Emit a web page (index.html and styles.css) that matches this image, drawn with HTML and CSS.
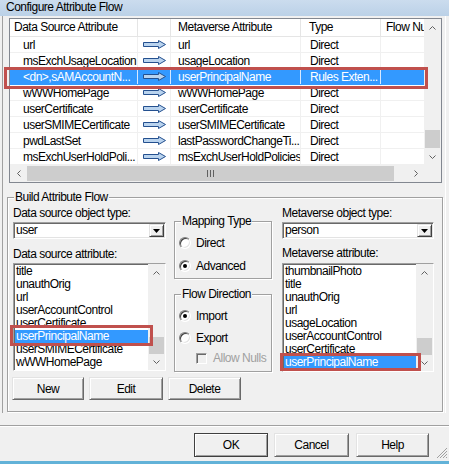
FILE: index.html
```html
<!DOCTYPE html>
<html>
<head>
<meta charset="utf-8">
<title>Configure Attribute Flow</title>
<link rel="stylesheet" href="styles.css">
</head>
<body>
<div class="title">Configure Attribute Flow</div>
<div class="frame">
  <div class="lv">
    <div class="lv-main">
      <div class="lv-body">
        <div class="lv-head">
          <div class="c c1">Data Source Attribute</div>
          <div class="c c2"></div>
          <div class="c c3">Metaverse Attribute</div>
          <div class="c c4">Type</div>
          <div class="c c5">Flow Nu</div>
        </div>
        <div class="lv-row"><div class="c c1">url</div><div class="c c2"><svg class="arrow" width="24" height="9" viewBox="0 0 24 9"><path d="M0.5 2.5H15.5V0.5L22.5 4.5L15.5 8.5V6.5H0.5Z" fill="#b9d3ee" stroke="#24508f"/></svg></div><div class="c c3">url</div><div class="c c4">Direct</div><div class="c c5"></div></div>
        <div class="lv-row"><div class="c c1">msExchUsageLocation</div><div class="c c2"><svg class="arrow" width="24" height="9" viewBox="0 0 24 9"><path d="M0.5 2.5H15.5V0.5L22.5 4.5L15.5 8.5V6.5H0.5Z" fill="#b9d3ee" stroke="#24508f"/></svg></div><div class="c c3">usageLocation</div><div class="c c4">Direct</div><div class="c c5"></div></div>
        <div class="lv-row sel"><div class="c c1">&lt;dn&gt;,sAMAccountN...</div><div class="c c2"><svg class="arrow" width="24" height="9" viewBox="0 0 24 9"><path d="M0.5 2.5H15.5V0.5L22.5 4.5L15.5 8.5V6.5H0.5Z" fill="#b9d3ee" stroke="#24508f"/></svg></div><div class="c c3">userPrincipalName</div><div class="c c4">Rules Exten...</div><div class="c c5"></div></div>
        <div class="lv-row"><div class="c c1">wWWHomePage</div><div class="c c2"><svg class="arrow" width="24" height="9" viewBox="0 0 24 9"><path d="M0.5 2.5H15.5V0.5L22.5 4.5L15.5 8.5V6.5H0.5Z" fill="#b9d3ee" stroke="#24508f"/></svg></div><div class="c c3">wWWHomePage</div><div class="c c4">Direct</div><div class="c c5"></div></div>
        <div class="lv-row"><div class="c c1">userCertificate</div><div class="c c2"><svg class="arrow" width="24" height="9" viewBox="0 0 24 9"><path d="M0.5 2.5H15.5V0.5L22.5 4.5L15.5 8.5V6.5H0.5Z" fill="#b9d3ee" stroke="#24508f"/></svg></div><div class="c c3">userCertificate</div><div class="c c4">Direct</div><div class="c c5"></div></div>
        <div class="lv-row"><div class="c c1">userSMIMECertificate</div><div class="c c2"><svg class="arrow" width="24" height="9" viewBox="0 0 24 9"><path d="M0.5 2.5H15.5V0.5L22.5 4.5L15.5 8.5V6.5H0.5Z" fill="#b9d3ee" stroke="#24508f"/></svg></div><div class="c c3">userSMIMECertificate</div><div class="c c4">Direct</div><div class="c c5"></div></div>
        <div class="lv-row"><div class="c c1">pwdLastSet</div><div class="c c2"><svg class="arrow" width="24" height="9" viewBox="0 0 24 9"><path d="M0.5 2.5H15.5V0.5L22.5 4.5L15.5 8.5V6.5H0.5Z" fill="#b9d3ee" stroke="#24508f"/></svg></div><div class="c c3">lastPasswordChangeTi...</div><div class="c c4">Direct</div><div class="c c5"></div></div>
        <div class="lv-row"><div class="c c1">msExchUserHoldPoli...</div><div class="c c2"><svg class="arrow" width="24" height="9" viewBox="0 0 24 9"><path d="M0.5 2.5H15.5V0.5L22.5 4.5L15.5 8.5V6.5H0.5Z" fill="#b9d3ee" stroke="#24508f"/></svg></div><div class="c c3">msExchUserHoldPolicies</div><div class="c c4">Direct</div><div class="c c5"></div></div>
      </div>
      <div class="vscroll">
        <div class="sb-btn"><svg width="7" height="4" viewBox="0 0 7 4"><polyline points="0.5,3.5 3.5,0.5 6.5,3.5" fill="none" stroke="#606060"/></svg></div>
        <div class="vtrack"></div>
        <div class="vthumb"></div>
        <div class="sb-btn"><svg width="7" height="4" viewBox="0 0 7 4"><polyline points="0.5,0.5 3.5,3.5 6.5,0.5" fill="none" stroke="#606060"/></svg></div>
      </div>
    </div>
    <div class="hscroll">
      <div class="sb-btn"><svg width="4" height="7" viewBox="0 0 4 7"><polyline points="3.5,0.5 0.5,3.5 3.5,6.5" fill="none" stroke="#606060"/></svg></div>
      <div class="hthumb"><span class="grip-line"></span><span class="grip-line"></span><span class="grip-line"></span></div>
      <div class="htrack"></div>
      <div class="sb-btn"><svg width="4" height="7" viewBox="0 0 4 7"><polyline points="0.5,0.5 3.5,3.5 0.5,6.5" fill="none" stroke="#606060"/></svg></div>
      <div class="corner"></div>
    </div>
  </div>

  <div class="gbox build">
    <span class="legend">Build Attribute Flow</span>
    <div class="cols">
      <div class="col-left">
        <div class="flabel">Data source object type:</div>
        <div class="combo"><span class="val">user</span><span class="ddbtn"><svg width="7" height="4" viewBox="0 0 7 4"><path d="M0 0H7L3.5 4Z" fill="#000"/></svg></span></div>
        <div class="flabel gap">Data source attribute:</div>
        <div class="listbox">
          <div class="items">
            <div class="item">title</div>
            <div class="item">unauthOrig</div>
            <div class="item">url</div>
            <div class="item">userAccountControl</div>
            <div class="item">userCertificate</div>
            <div class="item sel">userPrincipalName</div>
            <div class="item">userSMIMECertificate</div>
            <div class="item">wWWHomePage</div>
          </div>
          <div class="lscroll">
            <div class="sb-btn"><svg width="7" height="4" viewBox="0 0 7 4"><polyline points="0.5,3.5 3.5,0.5 6.5,3.5" fill="none" stroke="#606060"/></svg></div>
            <div class="ltrack"></div>
            <div class="lthumb"></div>
            <div class="sb-btn"><svg width="7" height="4" viewBox="0 0 7 4"><polyline points="0.5,0.5 3.5,3.5 6.5,0.5" fill="none" stroke="#606060"/></svg></div>
          </div>
        </div>
      </div>
      <div class="col-mid">
        <div class="gbox mapping">
          <span class="legend">Mapping Type</span>
          <div class="opt"><span class="radio"></span><span>Direct</span></div>
          <div class="opt second"><span class="radio on"></span><span>Advanced</span></div>
        </div>
        <div class="gbox flow">
          <span class="legend">Flow Direction</span>
          <div class="opt"><span class="radio on"></span><span>Import</span></div>
          <div class="opt export"><span class="radio"></span><span>Export</span></div>
          <div class="opt nulls"><span class="check"></span><span class="disabled">Allow Nulls</span></div>
        </div>
      </div>
      <div class="col-right">
        <div class="flabel">Metaverse object type:</div>
        <div class="combo"><span class="val">person</span><span class="ddbtn"><svg width="7" height="4" viewBox="0 0 7 4"><path d="M0 0H7L3.5 4Z" fill="#000"/></svg></span></div>
        <div class="flabel gap2">Metaverse attribute:</div>
        <div class="listbox tall">
          <div class="items">
            <div class="item">thumbnailPhoto</div>
            <div class="item">title</div>
            <div class="item">unauthOrig</div>
            <div class="item">url</div>
            <div class="item">usageLocation</div>
            <div class="item">userAccountControl</div>
            <div class="item">userCertificate</div>
            <div class="item sel">userPrincipalName</div>
            <div class="item">userSMIMECertificate</div>
          </div>
          <div class="lscroll">
            <div class="sb-btn"><svg width="7" height="4" viewBox="0 0 7 4"><polyline points="0.5,3.5 3.5,0.5 6.5,3.5" fill="none" stroke="#606060"/></svg></div>
            <div class="ltrack"></div>
            <div class="lthumb"></div>
            <div class="sb-btn"><svg width="7" height="4" viewBox="0 0 7 4"><polyline points="0.5,0.5 3.5,3.5 6.5,0.5" fill="none" stroke="#606060"/></svg></div>
          </div>
        </div>
      </div>
    </div>
    <div class="btnrow">
      <div class="btn b-new">New</div>
      <div class="btn b-edit">Edit</div>
      <div class="btn b-del">Delete</div>
    </div>
  </div>
</div>
<div class="sep"></div>
<div class="dlg-buttons">
  <div class="btn b-ok">OK</div>
  <div class="btn b-cancel">Cancel</div>
  <div class="btn b-help">Help</div>
</div>
<div class="strip"></div>

<svg class="sizegrip" width="12" height="12" viewBox="0 0 12 12">
  <line x1="11" y1="1" x2="1" y2="11" stroke="#a0a0a0"/>
  <line x1="11" y1="4" x2="4" y2="11" stroke="#a0a0a0"/>
  <line x1="11" y1="7" x2="7" y2="11" stroke="#a0a0a0"/>
  <line x1="11" y1="10" x2="10" y2="11" stroke="#a0a0a0"/>
</svg>

<div class="mark mark-row"></div>
<div class="mark mark-left"></div>
<div class="mark mark-right"></div>
</body>
</html>
```

FILE: styles.css
```css
* { box-sizing: border-box; }
html, body { margin: 0; padding: 0; }
body {
  width: 449px;
  height: 464px;
  overflow: hidden;
  position: relative;
  background: #f0f0f0;
  font-family: "Liberation Sans", Arial, sans-serif;
  font-size: 12px;
  letter-spacing: -0.5px;
  color: #000;
}

.title {
  height: 16px;
  line-height: 15px;
  padding-left: 6px;
  background: linear-gradient(#cbdcee, #bbd1e7);
}

.frame {
  margin-left: 2px;
  width: 444px;
  height: 397px;
  border-left: 1px solid #a0a0a0;
  border-right: 1px solid #ffffff;
  padding: 2px 0 0 6px;
}

/* list view */
.lv {
  width: 433px;
  height: 165px;
  border: 1px solid #828790;
  background: #fff;
  display: flex;
  flex-direction: column;
}
.lv-main { display: flex; height: 146px; }
.lv-body { width: 414px; overflow: hidden; }
.lv-head, .lv-row { display: flex; white-space: nowrap; }
.lv-head { height: 18px; line-height: 17px; border-bottom: 1px solid #e5e5e5; }
.lv-head .c { border-right: 1px solid #e5e5e5; }
.c { flex: none; overflow: hidden; white-space: nowrap; }
.c1 { width: 128px; }
.c2 { width: 33px; }
.c3 { width: 130px; }
.c4 { width: 80px; }
.c5 { width: 60px; }
.lv-head .c1 { padding-left: 4px; }
.lv-head .c3 { padding-left: 7px; }
.lv-head .c4 { padding-left: 8px; }
.lv-head .c5 { padding-left: 5px; }
.lv-row { height: 16px; line-height: 16px; border-bottom: 1px solid #f0f0f0; }
.lv-row .c { border-right: 1px solid #f0f0f0; }
.lv-row .c1 { padding-left: 13px; }
.lv-row .c2 { display: flex; align-items: center; padding-left: 5px; }
.lv-row .c3 { padding-left: 7px; }
.lv-row .c4 { padding-left: 9px; }
.arrow { display: block; }
.lv-row.sel { background: #3399ff; color: #fff; border-bottom-color: #3399ff; }
.lv-row.sel .c { border-right-color: #d8e8ff; }

.sb-btn {
  width: 17px;
  height: 17px;
  flex: none;
  display: flex;
  align-items: center;
  justify-content: center;
}
.sb-btn svg { display: block; }
.vscroll { width: 17px; display: flex; flex-direction: column; background: #f0f0f0; }
.vtrack { height: 94px; }
.vthumb { height: 18px; background: #cdcdcd; margin: 0 1px; }

.hscroll { height: 17px; display: flex; background: #f0f0f0; }
.hthumb {
  width: 367px;
  margin: 1px 0;
  background: #cdcdcd;
  display: flex;
  justify-content: center;
  align-items: center;
  gap: 2px;
}
.grip-line { width: 1px; height: 7px; background: #606060; }
.htrack { width: 13px; }
.corner { width: 17px; background: #f0f0f0; }

/* group boxes */
.gbox {
  position: relative;
  border: 1px solid #a0a0a0;
  box-shadow: inset 1px 1px 0 #fff, 1px 1px 0 #fff;
}
.legend {
  position: absolute;
  top: -8px;
  left: 6px;
  padding: 0 1px;
  line-height: 14px;
  background: #f0f0f0;
  white-space: nowrap;
}
.build {
  margin: 14px 0 0 -2px;
  width: 436px;
  height: 215px;
  padding: 8px 0 0 5px;
}
.cols { display: flex; height: 166px; }
.col-left { width: 153px; margin-right: 8px; }
.col-mid { width: 98px; margin-right: 10px; }
.col-right { width: 152px; }

.flabel { height: 14px; line-height: 14px; white-space: nowrap; }
.flabel.gap { margin-top: 8px; }
.flabel.gap2 { margin-top: 7px; }

.combo {
  margin-top: 2px;
  height: 17px;
  display: flex;
  padding: 1px;
  background: #fff;
  border: 1px solid;
  border-color: #a0a0a0 #ffffff #ffffff #a0a0a0;
  box-shadow: inset 1px 1px 0 #696969, inset -1px -1px 0 #e3e3e3;
}
.combo .val { flex: 1; padding-left: 1px; line-height: 13px; }
.ddbtn {
  width: 15px;
  height: 13px;
  display: flex;
  align-items: center;
  justify-content: center;
  background: #f0f0f0;
  border: 1px solid;
  border-color: #e3e3e3 #404040 #404040 #e3e3e3;
  box-shadow: inset 1px 1px 0 #fff, inset -1px -1px 0 #a0a0a0;
}
.ddbtn svg { display: block; }

.listbox {
  margin-top: 2px;
  height: 108px;
  display: flex;
  background: #fff;
  border: 1px solid;
  border-color: #a0a0a0 #ffffff #ffffff #a0a0a0;
  box-shadow: inset 1px 1px 0 #696969;
  overflow: hidden;
}
.listbox.tall { height: 109px; margin-top: 3px; }
.items { flex: 1; overflow: hidden; padding: 1px 0 0 1px; }
.item { height: 13px; line-height: 13px; padding-left: 1px; white-space: nowrap; }
.item.sel { background: #3399ff; color: #fff; }
.lscroll { width: 17px; display: flex; flex-direction: column; background: #f0f0f0; }
.ltrack { flex: 1; }
.lthumb { height: 17px; background: #cdcdcd; margin: 0 1px; }
.lscroll .sb-btn:last-child { height: 16px; }

/* radio / check */
.mapping { margin-top: 15px; height: 58px; padding-top: 13px; }
.flow { margin-top: 15px; height: 78px; padding-top: 13px; }
.opt { height: 16px; display: flex; align-items: center; padding-left: 4px; white-space: nowrap; }
.opt.second { margin-top: 7px; }
.opt.export { margin-top: 6px; }
.opt.nulls { margin-top: 4px; padding-left: 21px; }
.radio {
  width: 12px;
  height: 12px;
  margin-right: 5px;
  border-radius: 50%;
  background: #fff;
  border: 1px solid;
  border-color: #808080 #ffffff #ffffff #808080;
  box-shadow: inset 1px 1px 0 #404040, inset -1px -1px 0 #e3e3e3;
  display: flex;
  align-items: center;
  justify-content: center;
}
.radio.on::after {
  content: "";
  width: 4px;
  height: 4px;
  border-radius: 50%;
  background: #000;
}
.check {
  width: 11px;
  height: 11px;
  margin-right: 6px;
  background: #f0f0f0;
  border: 1px solid;
  border-color: #a0a0a0 #ffffff #ffffff #a0a0a0;
  box-shadow: inset 1px 1px 0 #696969;
}
.disabled { color: #a0a0a0; }

/* buttons */
.btn {
  height: 23px;
  display: flex;
  align-items: center;
  justify-content: center;
  background: #f0f0f0;
  border: 1px solid;
  border-color: #e3e3e3 #696969 #696969 #e3e3e3;
  box-shadow: inset 1px 1px 0 #fff, inset -1px -1px 0 #a0a0a0;
}
.btnrow { display: flex; margin: 5px 0 0 -1px; gap: 5px; }
.b-new { width: 72px; }
.b-edit { width: 74px; }
.b-del { width: 73px; }

.sep {
  margin-top: 12px;
  height: 2px;
  border-top: 1px solid #a0a0a0;
  border-bottom: 1px solid #ffffff;
}
.dlg-buttons {
  margin-top: 6px;
  display: flex;
  justify-content: flex-end;
  padding-right: 20px;
}
.dlg-buttons .btn { height: 24px; }
.b-ok { width: 74px; border-color: #404040; }
.b-cancel { width: 75px; margin-left: 6px; }
.b-help { width: 73px; margin-left: 7px; }

.strip { margin-top: 4px; height: 3px; background: #62b2d8; }

.sizegrip { position: absolute; left: 436px; top: 447px; }

/* red annotation boxes */
.mark { position: absolute; border: 3px solid #c0504d; }
.mark-row { left: 4px; top: 67px; width: 424px; height: 22px; }
.mark-left { left: 10px; top: 325px; width: 143px; height: 21px; }
.mark-right { left: 280px; top: 353px; width: 141px; height: 18px; }
```
